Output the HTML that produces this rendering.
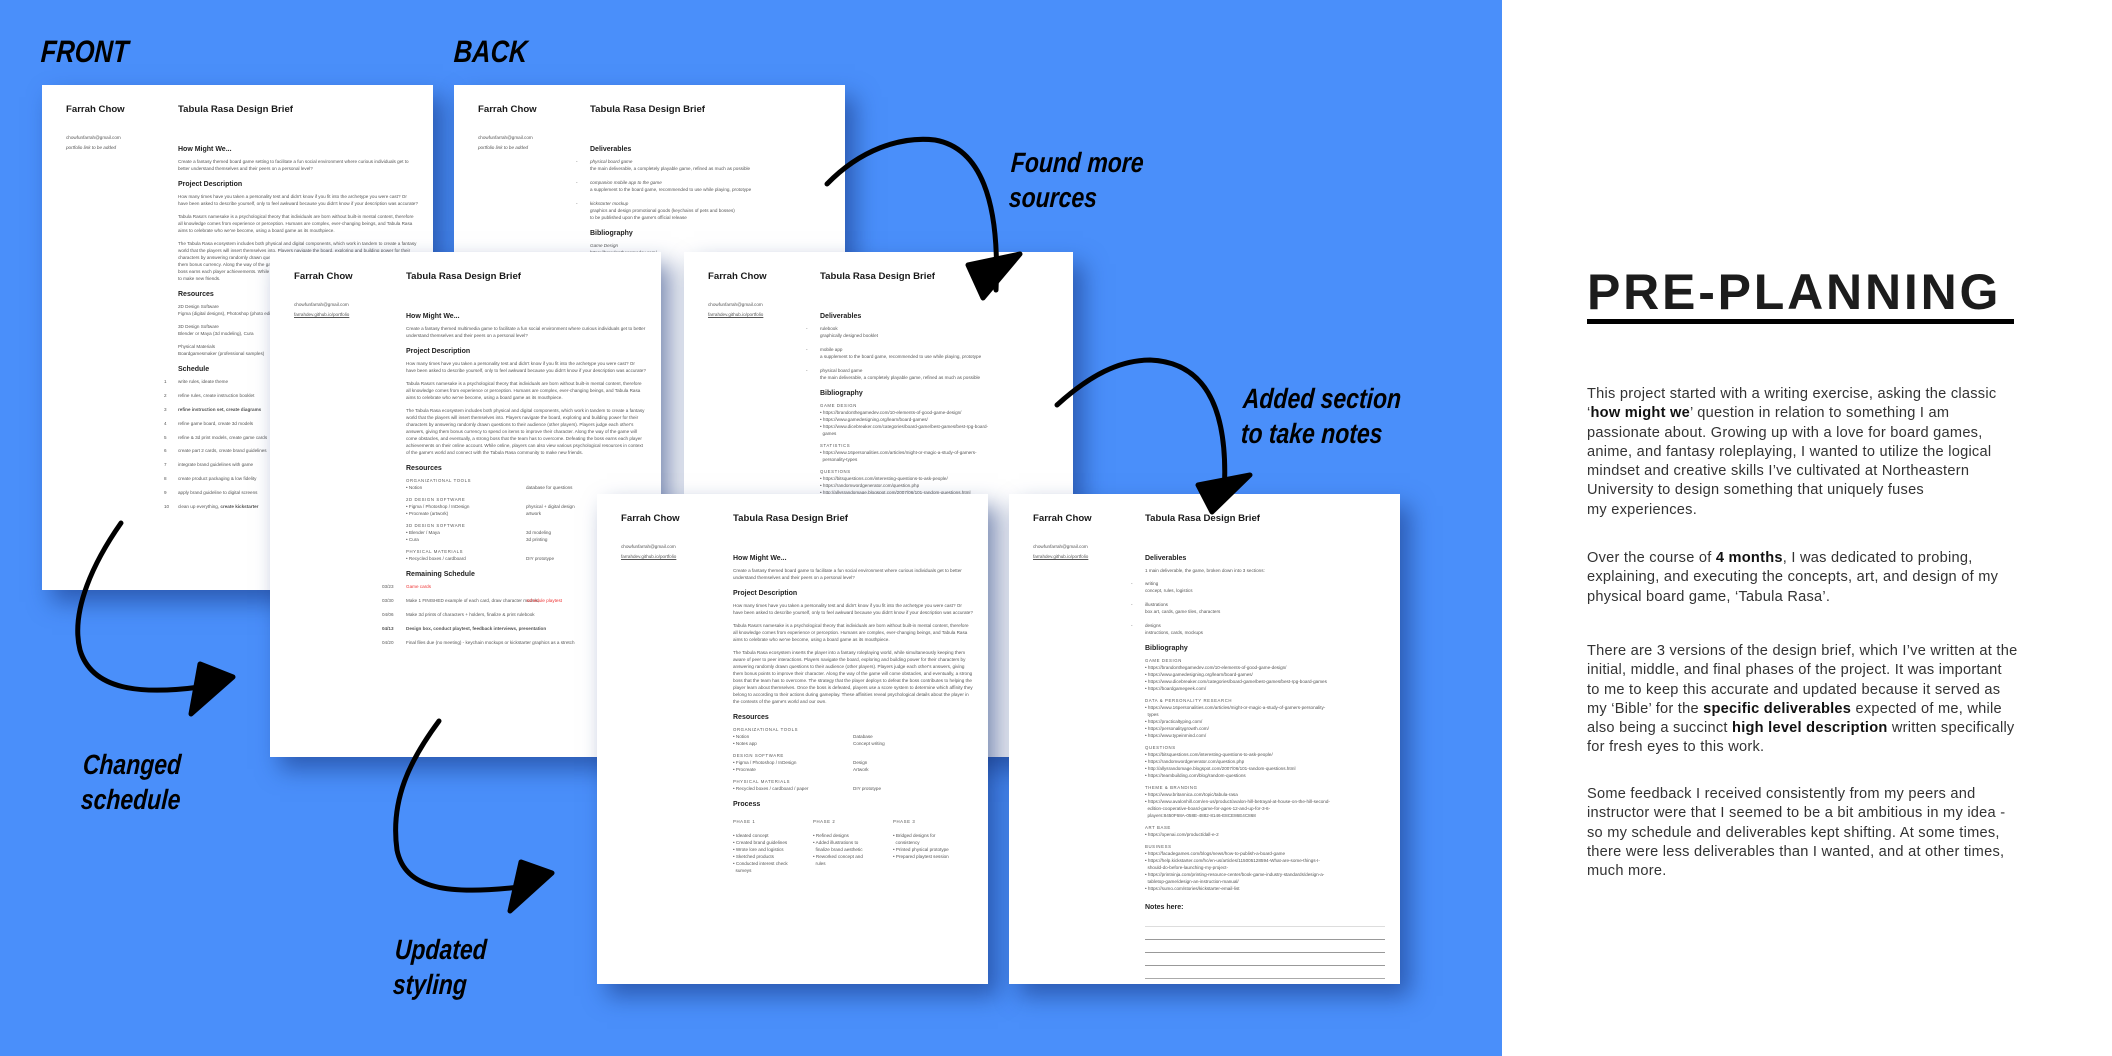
<!DOCTYPE html>
<html><head><meta charset="utf-8">
<style>
*{margin:0;padding:0;box-sizing:border-box}
body{width:2112px;height:1056px;overflow:hidden;background:#fff;font-family:"Liberation Sans",sans-serif;position:relative}
#blue{position:absolute;left:0;top:0;width:1502px;height:1056px;background:#4a8ffa}
.pg{position:absolute;width:391px;height:505px;background:#fff;box-shadow:10px 12px 22px rgba(20,50,120,.55);overflow:hidden;color:#555}
.nm{position:absolute;left:24px;top:19px;font-weight:bold;font-size:9.6px;color:#1a1a1a}
.tt{position:absolute;left:136px;top:19px;font-weight:bold;font-size:9.6px;color:#1a1a1a}
.em{position:absolute;left:24px;top:48px;font-size:4.6px;line-height:9.5px;color:#555}
.em u{color:#555}
.c{position:absolute;left:136px;top:52px;width:240px;font-size:4.6px;line-height:7px}
.c h4{font-size:7px;color:#222;margin:9px 0 5px}
.c p{margin-bottom:6px}
.c .k{letter-spacing:.6px;font-size:4.3px;margin-top:5px}
.c .d{position:relative;margin-bottom:7px}
.c .d:before{content:"-";position:absolute;left:-14px}
.c .s{display:flex;margin-bottom:6.9px}
.c .s span:first-child{width:0;position:relative;left:-14px}
.c .g{display:flex}.c .g div{flex:1}
.c ul{list-style:none}.c li:before{content:"• "}
.hw{position:absolute;font-family:"Liberation Sans Narrow","Liberation Sans",sans-serif;font-style:italic;font-weight:bold;color:#000;font-size:28px;line-height:35px;transform:scaleX(.82) skewX(-4deg);transform-origin:left top;white-space:nowrap}
#rp{position:absolute;left:1587px;top:0;width:440px}
#rp h1{position:absolute;top:263px;left:0;font-size:50px;font-weight:bold;letter-spacing:2.8px;color:#1c1c1c;white-space:nowrap;transform:scaleY(1.0);transform-origin:top left}
#rp .ln{position:absolute;top:319px;left:0;width:427px;height:5px;background:#000}
#rp p{position:absolute;left:0;width:440px;font-size:14.6px;line-height:19.3px;color:#333;letter-spacing:.25px;white-space:nowrap}
#rp b{color:#111}
</style></head><body>
<div id="blue"></div>

<div class="hw" style="left:42px;top:34px;font-size:31px">FRONT</div>
<div class="hw" style="left:455px;top:34px;font-size:31px">BACK</div>

<!-- Page A -->
<div class="pg" style="left:42px;top:85px">
<div class="nm">Farrah Chow</div><div class="tt">Tabula Rasa Design Brief</div>
<div class="em">chowfunfarrah@gmail.com<br><i>portfolio link to be added</i></div>
<div class="c">
<h4>How Might We...</h4>
<p>Create a fantasy themed board game setting to facilitate a fun social environment where curious individuals get to better understand themselves and their peers on a personal level?</p>
<h4>Project Description</h4>
<p>How many times have you taken a personality test and didn't know if you fit into the archetype you were cast? Or have been asked to describe yourself, only to feel awkward because you didn't know if your description was accurate?</p>
<p>Tabula Rasa's namesake is a psychological theory that individuals are born without built-in mental content, therefore all knowledge comes from experience or perception. Humans are complex, ever-changing beings, and Tabula Rasa aims to celebrate who we've become, using a board game as its mouthpiece.</p>
<p>The Tabula Rasa ecosystem includes both physical and digital components, which work in tandem to create a fantasy world that the players will insert themselves into. Players navigate the board, exploring and building power for their characters by answering randomly drawn questions to their audience. Players judge each other's answers, giving them bonus currency. Along the way of the game will come obstacles, and a strong boss to overcome. Defeating the boss earns each player achievements. While online, players can also view various resources. Tabula Rasa community to make new friends.</p>
<h4>Resources</h4>
<p>2D Design Software<br>Figma (digital designs), Photoshop (photo editing)</p>
<p>3D Design Software<br>Blender or Maya (3d modeling), Cura</p>
<p>Physical Materials<br>Boardgamesmaker (professional samples)</p>
<h4>Schedule</h4>
<div class="s"><span>1</span><span>write rules, ideate theme</span></div>
<div class="s"><span>2</span><span>refine rules, create instruction booklet</span></div>
<div class="s"><span>3</span><b>refine instruction set, create diagrams</b></div>
<div class="s"><span>4</span><span>refine game board, create 3d models</span></div>
<div class="s"><span>5</span><span>refine &amp; 3d print models, create game cards</span></div>
<div class="s"><span>6</span><span>create part 2 cards, create brand guidelines</span></div>
<div class="s"><span>7</span><span>integrate brand guidelines with game</span></div>
<div class="s"><span>8</span><span>create product packaging &amp; low fidelity</span></div>
<div class="s"><span>9</span><span>apply brand guideline to digital screens</span></div>
<div class="s"><span>10</span><span>clean up everything, <b>create kickstarter</b></span></div>
</div></div>

<!-- Page B -->
<div class="pg" style="left:454px;top:85px">
<div class="nm">Farrah Chow</div><div class="tt">Tabula Rasa Design Brief</div>
<div class="em">chowfunfarrah@gmail.com<br><i>portfolio link to be added</i></div>
<div class="c">
<h4>Deliverables</h4>
<div class="d"><i>physical board game</i><br>the main deliverable, a completely playable game, refined as much as possible</div>
<div class="d"><i>companion mobile app to the game</i><br>a supplement to the board game, recommended to use while playing, prototype</div>
<div class="d"><i>kickstarter mockup</i><br>graphics and design promotional goods (keychains of pets and bosses)<br>to be published upon the game's official release</div>
<h4>Bibliography</h4>
<p><i>Game Design</i><br>https://brandonthegamedev.com/<br>https://www.gamedesigning.org/l<br>https://www.dicebreaker.com/cat</p>
</div></div>

<!-- Page C -->
<div class="pg" style="left:270px;top:252px">
<div class="nm">Farrah Chow</div><div class="tt">Tabula Rasa Design Brief</div>
<div class="em">chowfunfarrah@gmail.com<br><u>farrahdev.github.io/portfolio</u></div>
<div class="c">
<h4>How Might We...</h4>
<p>Create a fantasy themed multimedia game to facilitate a fun social environment where curious individuals get to better understand themselves and their peers on a personal level?</p>
<h4>Project Description</h4>
<p>How many times have you taken a personality test and didn't know if you fit into the archetype you were cast? Or have been asked to describe yourself, only to feel awkward because you didn't know if your description was accurate?</p>
<p>Tabula Rasa's namesake is a psychological theory that individuals are born without built-in mental content, therefore all knowledge comes from experience or perception. Humans are complex, ever-changing beings, and Tabula Rasa aims to celebrate who we've become, using a board game as its mouthpiece.</p>
<p>The Tabula Rasa ecosystem includes both physical and digital components, which work in tandem to create a fantasy world that the players will insert themselves into. Players navigate the board, exploring and building power for their characters by answering randomly drawn questions to their audience (other players). Players judge each other's answers, giving them bonus currency to spend on items to improve their character. Along the way of the game will come obstacles, and eventually, a strong boss that the team has to overcome. Defeating the boss earns each player achievements on their online account. While online, players can also view various psychological resources in context of the game's world and connect with the Tabula Rasa community to make new friends.</p>
<h4>Resources</h4>
<div class="k">ORGANIZATIONAL TOOLS</div>
<div class="g"><div>• Notion</div><div>database for questions</div></div>
<div class="k">2D DESIGN SOFTWARE</div>
<div class="g"><div>• Figma / Photoshop / InDesign<br>• Procreate (artwork)</div><div>physical + digital design<br>artwork</div></div>
<div class="k">3D DESIGN SOFTWARE</div>
<div class="g"><div>• Blender / Maya<br>• Cura</div><div>3d modeling<br>3d printing</div></div>
<div class="k">PHYSICAL MATERIALS</div>
<div class="g"><div>• Recycled boxes / cardboard</div><div>DIY prototype</div></div>
<h4>Remaining Schedule</h4>
<div class="s"><span style="left:-24px">03/23</span><span style="color:#e33">Game cards</span></div>
<div class="s"><span style="left:-24px">03/30</span><span>Make 1 FINISHED example of each card, draw character models, <span style="color:#e33">schedule playtest</span></span></div>
<div class="s"><span style="left:-24px">04/06</span><span>Make 3d prints of characters + holders, finalize &amp; print rulebook</span></div>
<div class="s"><b style="width:0;position:relative;left:-24px">04/13</b><b>Design box, conduct playtest, feedback interviews, presentation</b></div>
<div class="s"><span style="left:-24px">04/20</span><span>Final files due (no meeting) - keychain mockups or kickstarter graphics as a stretch</span></div>
</div></div>

<!-- Page D -->
<div class="pg" style="left:684px;top:252px;width:389px">
<div class="nm">Farrah Chow</div><div class="tt">Tabula Rasa Design Brief</div>
<div class="em">chowfunfarrah@gmail.com<br><u>farrahdev.github.io/portfolio</u></div>
<div class="c">
<h4>Deliverables</h4>
<div class="d">rulebook<br>graphically designed booklet</div>
<div class="d">mobile app<br>a supplement to the board game, recommended to use while playing, prototype</div>
<div class="d">physical board game<br>the main deliverable, a completely playable game, refined as much as possible</div>
<h4>Bibliography</h4>
<div class="k">GAME DESIGN</div>
<ul><li>https://brandonthegamedev.com/10-elements-of-good-game-design/</li><li>https://www.gamedesigning.org/learn/board-games/</li><li>https://www.dicebreaker.com/categories/board-game/best-games/best-rpg-board-<br>&nbsp;&nbsp;games</li></ul>
<div class="k">STATISTICS</div>
<ul><li>https://www.16personalities.com/articles/might-or-magic-a-study-of-gamers-<br>&nbsp;&nbsp;personality-types</li></ul>
<div class="k">QUESTIONS</div>
<ul><li>https://bitsquestions.com/interesting-questions-to-ask-people/</li><li>https://randomwordgenerator.com/question.php</li><li>http://allysrandomage.blogspot.com/2007/06/101-random-questions.html</li></ul>
</div></div>

<!-- Page E -->
<div class="pg" style="left:597px;top:494px;height:490px">
<div class="nm">Farrah Chow</div><div class="tt">Tabula Rasa Design Brief</div>
<div class="em">chowfunfarrah@gmail.com<br><u>farrahdev.github.io/portfolio</u></div>
<div class="c">
<h4>How Might We...</h4>
<p>Create a fantasy themed board game to facilitate a fun social environment where curious individuals get to better understand themselves and their peers on a personal level?</p>
<h4>Project Description</h4>
<p>How many times have you taken a personality test and didn't know if you fit into the archetype you were cast? Or have been asked to describe yourself, only to feel awkward because you didn't know if your description was accurate?</p>
<p>Tabula Rasa's namesake is a psychological theory that individuals are born without built-in mental content, therefore all knowledge comes from experience or perception. Humans are complex, ever-changing beings, and Tabula Rasa aims to celebrate who we've become, using a board game as its mouthpiece.</p>
<p>The Tabula Rasa ecosystem inserts the player into a fantasy roleplaying world, while simultaneously keeping them aware of peer to peer interactions. Players navigate the board, exploring and building power for their characters by answering randomly drawn questions to their audience (other players). Players judge each other's answers, giving them bonus points to improve their character. Along the way of the game will come obstacles, and eventually, a strong boss that the team has to overcome. The strategy that the player deploys to defeat the boss contributes to helping the player learn about themselves. Once the boss is defeated, players use a score system to determine which affinity they belong to according to their actions during gameplay. These affinities reveal psychological details about the player in the contexts of the game's world and our own.</p>
<h4>Resources</h4>
<div class="k">ORGANIZATIONAL TOOLS</div>
<div class="g"><div>• Notion<br>• Notes app</div><div>Database<br>Concept writing</div></div>
<div class="k">DESIGN SOFTWARE</div>
<div class="g"><div>• Figma / Photoshop / InDesign<br>• Procreate</div><div>Design<br>Artwork</div></div>
<div class="k">PHYSICAL MATERIALS</div>
<div class="g"><div>• Recycled boxes / cardboard / paper</div><div>DIY prototype</div></div>
<h4>Process</h4>
<div class="g"><div><div class="k">PHASE 1</div><br>• Ideated concept<br>• Created brand guidelines<br>• Wrote lore and logistics<br>• Sketched products<br>• Conducted interest check<br>&nbsp;&nbsp;surveys</div>
<div><div class="k">PHASE 2</div><br>• Refined designs<br>• Added illustrations to<br>&nbsp;&nbsp;finalize brand aesthetic<br>• Reworked concept and<br>&nbsp;&nbsp;rules</div>
<div><div class="k">PHASE 3</div><br>• Bridged designs for<br>&nbsp;&nbsp;consistency<br>• Printed physical prototype<br>• Prepared playtest session</div></div>
</div></div>

<!-- Page F -->
<div class="pg" style="left:1009px;top:494px;height:490px">
<div class="nm">Farrah Chow</div><div class="tt">Tabula Rasa Design Brief</div>
<div class="em">chowfunfarrah@gmail.com<br><u>farrahdev.github.io/portfolio</u></div>
<div class="c">
<h4>Deliverables</h4>
<p>1 main deliverable, the game, broken down into 3 sections:</p>
<div class="d">writing<br>concept, rules, logistics</div>
<div class="d">illustrations<br>box art, cards, game tiles, characters</div>
<div class="d">designs<br>instructions, cards, mockups</div>
<h4>Bibliography</h4>
<div class="k">GAME DESIGN</div>
<ul><li>https://brandonthegamedev.com/10-elements-of-good-game-design/</li><li>https://www.gamedesigning.org/learn/board-games/</li><li>https://www.dicebreaker.com/categories/board-game/best-games/best-rpg-board-games</li><li>https://boardgamegeek.com/</li></ul>
<div class="k">DATA &amp; PERSONALITY RESEARCH</div>
<ul><li>https://www.16personalities.com/articles/might-or-magic-a-study-of-gamers-personality-<br>&nbsp;&nbsp;types</li><li>https://practicaltyping.com/</li><li>https://personalitygrowth.com/</li><li>https://www.typeinmind.com/</li></ul>
<div class="k">QUESTIONS</div>
<ul><li>https://bitsquestions.com/interesting-questions-to-ask-people/</li><li>https://randomwordgenerator.com/question.php</li><li>http://allysrandomage.blogspot.com/2007/06/101-random-questions.html</li><li>https://teambuilding.com/blog/random-questions</li></ul>
<div class="k">THEME &amp; BRANDING</div>
<ul><li>https://www.britannica.com/topic/tabula-rasa</li><li>https://www.avalonhill.com/en-us/product/avalon-hill-betrayal-at-house-on-the-hill-second-<br>&nbsp;&nbsp;edition-cooperative-board-game-for-ages-12-and-up-for-3-6-<br>&nbsp;&nbsp;players:8450F68A-058E-4882-8146-E8CE86E4C868</li></ul>
<div class="k">ART BASE</div>
<ul><li>https://openai.com/product/dall-e-2</li></ul>
<div class="k">BUSINESS</div>
<ul><li>https://facadegames.com/blogs/news/how-to-publish-a-board-game</li><li>https://help.kickstarter.com/hc/en-us/articles/115005128594-What-are-some-things-I-<br>&nbsp;&nbsp;should-do-before-launching-my-project-</li><li>https://printninja.com/printing-resource-center/book-game-industry-standards/design-a-<br>&nbsp;&nbsp;tabletop-game/design-an-instruction-manual/</li><li>https://sumo.com/stories/kickstarter-email-list</li></ul>
<h4 style="margin-top:12px">Notes here:</h4>
<div style="height:11px;border-bottom:1.5px solid #ddd"></div>
<div style="height:13px;border-bottom:1px solid #999"></div>
<div style="height:13px;border-bottom:1px solid #999"></div>
<div style="height:13px;border-bottom:1px solid #999"></div>
<div style="height:13px;border-bottom:1px solid #aaa"></div>
</div></div>

<!-- Handwritten labels -->
<div class="hw" style="left:1012px;top:145px">Found more<br>sources</div>
<div class="hw" style="left:1244px;top:381px">Added section<br>to take notes</div>
<div class="hw" style="left:84px;top:747px">Changed<br>schedule</div>
<div class="hw" style="left:396px;top:932px">Updated<br>styling</div>

<!-- Arrows -->
<svg width="1502" height="1056" style="position:absolute;left:0;top:0" fill="none" stroke="#000" stroke-linecap="round" stroke-linejoin="round">
<path d="M827 184 C860 150 900 136 935 140 C980 148 1000 200 996 290" stroke-width="5"/>
<path d="M968 265 L983 298 L1020 254 Z M968 265 L1020 254" stroke-width="5" fill="#000"/>
<path d="M1057 405 C1090 375 1120 360 1150 360 C1200 362 1230 400 1224 495" stroke-width="5"/>
<path d="M1198 485 L1212 512 L1250 475 Z" stroke-width="5" fill="#000"/>
<path d="M121 523 C95 560 70 610 80 650 C92 690 140 695 200 687" stroke-width="5"/>
<path d="M200 664 L233 677 L191 714 Z" stroke-width="5" fill="#000"/>
<path d="M439 721 C410 760 390 800 397 850 C405 890 450 895 520 887" stroke-width="5"/>
<path d="M521 862 L552 873 L510 911 Z" stroke-width="5" fill="#000"/>
</svg>

<!-- Right panel -->
<div id="rp">
<h1>PRE-PLANNING</h1>
<div class="ln"></div>
<p style="top:385px">This project started with a writing exercise, asking the classic<br>‘<b>how might we</b>’ question in relation to something I am<br>passionate about. Growing up with a love for board games,<br>anime, and fantasy roleplaying, I wanted to utilize the logical<br>mindset and creative skills I’ve cultivated at Northeastern<br>University to design something that uniquely fuses<br>my experiences.</p>
<p style="top:549px">Over the course of <b>4 months</b>, I was dedicated to probing,<br>explaining, and executing the concepts, art, and design of my<br>physical board game, ‘Tabula Rasa’.</p>
<p style="top:642px">There are 3 versions of the design brief, which I’ve written at the<br>initial, middle, and final phases of the project. It was important<br>to me to keep this accurate and updated because it served as<br>my ‘Bible’ for the <b>specific deliverables</b> expected of me, while<br>also being a succinct <b>high level description</b> written specifically<br>for fresh eyes to this work.</p>
<p style="top:785px">Some feedback I received consistently from my peers and<br>instructor were that I seemed to be a bit ambitious in my idea -<br>so my schedule and deliverables kept shifting. At some times,<br>there were less deliverables than I wanted, and at other times,<br>much more.</p>
</div>
</body></html>
